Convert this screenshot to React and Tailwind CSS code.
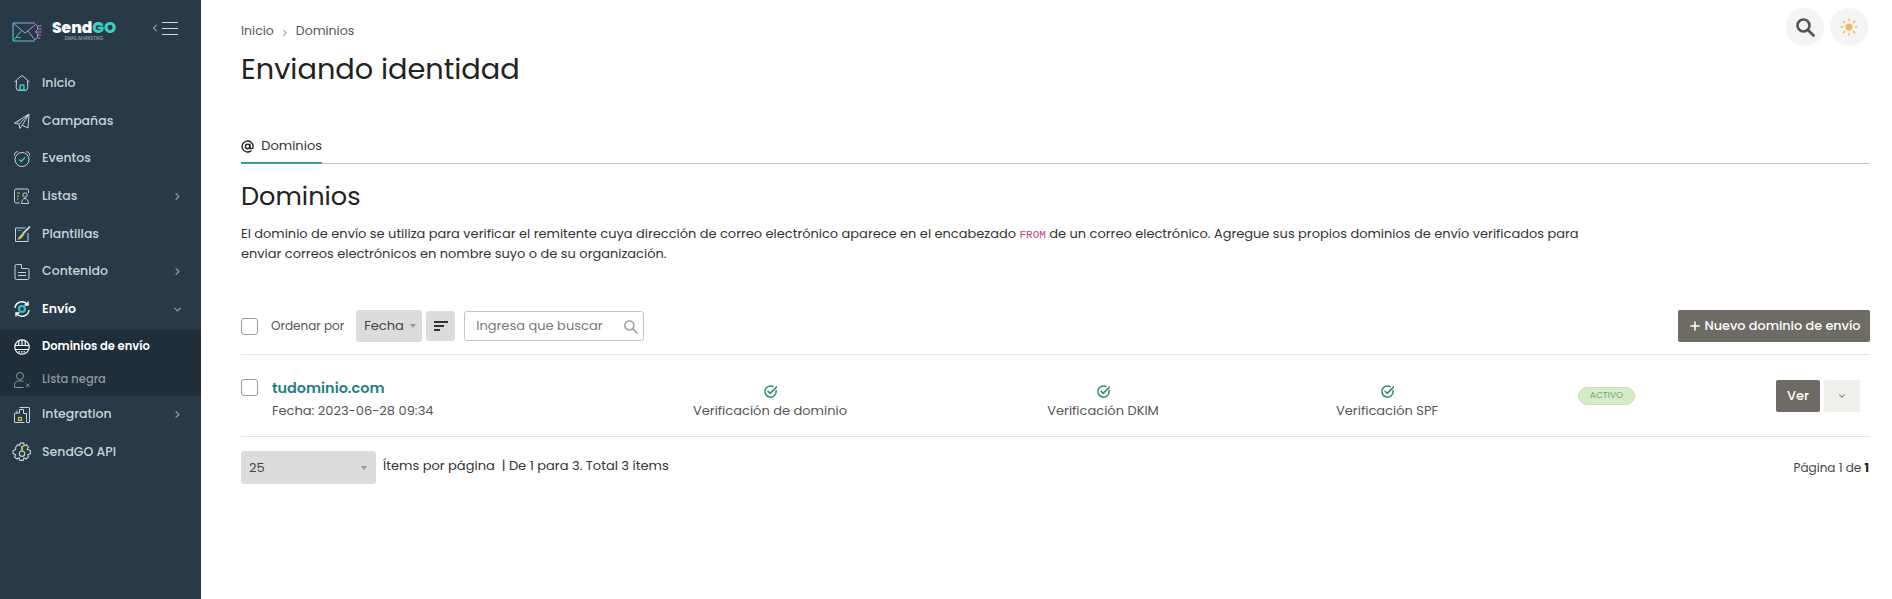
import React from 'react'
import { ChevronRight, ChevronDown, AtSign, Plus } from 'lucide-react'

const stroke = '#c9d3d6'

function Logo() {
  return (
    <svg width="32" height="21" viewBox="0 0 32 21" fill="none">
      <defs>
        <linearGradient id="lg" x1="0" y1="1" x2="1" y2="0">
          <stop offset="0" stopColor="#3ad0c8" />
          <stop offset="1" stopColor="#c58ae8" />
        </linearGradient>
      </defs>
      <path d="M23 1H2a1 1 0 0 0-1 1v16a1 1 0 0 0 1 1h21" stroke="url(#lg)" strokeWidth="1.100" />
      <path d="M1.500 1.500 13 11 23 3M1.500 18.500 9.500 8.500M23 18 16 9" stroke="url(#lg)" strokeWidth="1" />
      <path d="M4 15.500h5" stroke="#3ad0c8" strokeWidth="0.800" />
      <path d="M23 2l2.500 2v3l-2 2.500 2 2.500v3L23 18M25.500 4h4M26 7h3.500M23.500 10h6M26 13h3M25.500 16h2.500" stroke="#c58ae8" strokeWidth="0.900" />
    </svg>
  )
}

function MenuIcon({ name }) {
  const common = { width: 18, height: 18, viewBox: '0 0 18 18', fill: 'none', stroke, strokeWidth: 1 }
  switch (name) {
    case 'home':
      return (
        <svg {...common}>
          <path d="M1.500 8 8 2.200a1.500 1.500 0 0 1 2 0L16.500 8" />
          <path d="M3.500 6.800 3.200 13.500A3 3 0 0 0 6 16.500h6a3 3 0 0 0 2.800-3L14.500 6.800" />
          <path d="M7 16v-4a1 1 0 0 1 1-1h2a1 1 0 0 1 1 1v4Z" stroke="#3ad0c8" strokeWidth="1.400" />
        </svg>
      )
    case 'send':
      return (
        <svg {...common}>
          <path d="M16 2 1.500 11 6 12.300 16 2 9.200 13.300 15 16Z" />
          <path d="M6 12.300 6.800 16.500 9.200 13.300" />
          <path d="M9 6.500 4 11" stroke="#3ad0c8" strokeWidth="0.800" />
        </svg>
      )
    case 'clock':
      return (
        <svg {...common}>
          <circle cx="9" cy="9.500" r="7" />
          <path d="M1.500 5.500C1 3 3 1.500 5 1.800M16.500 5.500C17 3 15 1.500 13 1.800" />
          <path d="M6 9.500 8.200 11.500 12 7.500" stroke="#3ad0c8" strokeWidth="1.400" />
        </svg>
      )
    case 'list':
      return (
        <svg {...common}>
          <path d="M6.500 16H3a1.500 1.500 0 0 1-1.500-1.500v-11A1.500 1.500 0 0 1 3 2h11a1.500 1.500 0 0 1 1.500 1.500V6" />
          <circle cx="12" cy="8" r="2.200" />
          <path d="M8.500 16.500c0-3 1.500-5 3.500-5s3.500 2 3.500 5Z" />
          <path d="M4 6h3M4 9h2" stroke="#d9c44a" strokeWidth="1.200" />
          <path d="M4 12h1.500" />
        </svg>
      )
    case 'template':
      return (
        <svg {...common}>
          <path d="M12.500 3H2.500v13.500h12.500V8" />
          <path d="M4.500 5.500h4" stroke="#3ad0c8" strokeWidth="0.800" />
          <path d="M17 1.500 10 8.500" strokeWidth="1.800" />
          <path d="M10 8 6.500 11.500 5 14.500l3-1.200 3.200-4Z" fill="#d9c44a" stroke="#d9c44a" strokeWidth="0.600" />
        </svg>
      )
    case 'file':
      return (
        <svg {...common}>
          <path d="M2 3A1.500 1.500 0 0 1 3.500 1.500H8.500V5.500h6A1.500 1.500 0 0 1 16 7v8a1.500 1.500 0 0 1-1.500 1.500h-11A1.500 1.500 0 0 1 2 15Z" />
          <path d="M5 9.500h8M5 12.500h8" />
        </svg>
      )
    case 'sync':
      return (
        <svg {...common} stroke="#ffffff" strokeWidth="1.400">
          <path d="M2 8A7 7 0 0 1 14.500 4.500M16 10A7 7 0 0 1 3.500 13.500" />
          <path d="M15 1.500v3.500h-3.500M3 16.500V13h3.500" />
          <circle cx="9" cy="9" r="3" stroke="#2bc4d0" strokeWidth="2.200" />
        </svg>
      )
    case 'globe':
      return (
        <svg {...common} stroke="#ffffff" strokeWidth="1.200">
          <circle cx="9" cy="9" r="7.200" />
          <path d="M1.800 7.500h14.400M1.800 11.500h14.400M9 2v5.500M6 2.500 5.500 7.500M12 2.500l.5 5" />
          <path d="M5.500 13.800h7" strokeDasharray="1.500 1" />
        </svg>
      )
    case 'userx':
      return (
        <svg {...common} stroke="#8b979c">
          <circle cx="7" cy="5" r="3.500" />
          <path d="M1.500 16.500v-3c0-2 2-3.700 5.500-3.700 1.500 0 2.700.3 3.500.8M1.500 16.500h9" />
          <path d="M13 12.500l3.500 3.500M16.500 12.500 13 16" />
        </svg>
      )
    case 'puzzle':
      return (
        <svg {...common}>
          <path d="M6.500 1.500H16a.5.5 0 0 1 .5.5v14.500h-3V7.500h-3v-4h-4V7H2a.5.5 0 0 0-.5.500V16a.5.5 0 0 0 .5.500h9.500" />
          <path d="M4 4.500v3" />
          <rect x="5.500" y="11.500" width="3" height="3" stroke="#d9c44a" strokeWidth="1.200" />
        </svg>
      )
    case 'gear':
      return (
        <svg {...common} width="20" height="20" className="-mx-[1px]">
          <path d="M7.500 1h3l.5 2.200 2-.7 1.800 2.200-1.200 1.800 2.900 1.200v3l-2.200.6.500 2-2.200 2-1.800-1-.8 2.200h-3l-.7-2.200-1.900 1-2.100-2 .9-2-2.200-.6v-3l2.300-.9L3.200 5 5 2.500l1.900.7Z" />
          <circle cx="9" cy="10.500" r="2.400" />
          <path d="M9 3.500V8" stroke="#d9c44a" strokeWidth="1.600" />
          <path d="M9 3.800h2" stroke="#d9c44a" strokeWidth="1.200" />
        </svg>
      )
    default:
      return null
  }
}

const menuItems = [
  { label: 'Inicio', icon: 'home', className: 'h-[38px]' },
  { label: 'Campañas', icon: 'send', className: 'h-[38px]' },
  { label: 'Eventos', icon: 'clock', className: 'h-[37px]' },
  { label: 'Listas', icon: 'list', arrow: 'right', className: 'h-[38px]' },
  { label: 'Plantillas', icon: 'template', className: 'h-[38px]' },
  { label: 'Contenido', icon: 'file', arrow: 'right', className: 'h-[37px]' },
  { label: 'Envío', icon: 'sync', arrow: 'down', active: true, className: 'h-[38px]' },
]

function MenuRow({ item }) {
  return (
    <div className={`flex items-center pl-[13px] pr-[18px] ${item.className}`}>
      <MenuIcon name={item.icon} />
      <span className={`ml-[11px] flex-1 text-[12.500px] ${item.active ? 'font-semibold text-white' : 'font-medium text-[#c9d3d6]'}`}>
        {item.label}
      </span>
      {item.arrow === 'right' && <ChevronRight size={11} strokeWidth={3} className="text-[#8b979c]" />}
      {item.arrow === 'down' && <ChevronDown size={11} strokeWidth={3} className="text-[#8b979c]" />}
    </div>
  )
}

function Sidebar() {
  return (
    <aside className="w-[201px] shrink-0 bg-[#283a48] h-screen overflow-hidden">
      <div className="flex items-center h-[64px] pl-[12px] pr-[23px]">
        <Logo />
        <div className="ml-[8px] w-[64px] text-center -mt-[3px]">
          <div className="text-[15.500px] leading-[16px] font-extrabold text-white">
            Send<span className="text-[#3ad0c8]">GO</span>
          </div>
          <div className="text-[4.500px] leading-[5px] text-[#aab4b8]">EMAIL MARKETING</div>
        </div>
        <div className="ml-auto flex items-center gap-[1px] -mt-[8px]">
          <ChevronRight size={12} className="text-[#d5dcde] rotate-180" />
          <div className="flex flex-col gap-[5px]">
            <div className="w-[16px] h-px bg-[#d5dcde]" />
            <div className="w-[16px] h-px bg-[#d5dcde]" />
            <div className="w-[16px] h-px bg-[#d5dcde]" />
          </div>
        </div>
      </div>
      {menuItems.map((item) => (
        <MenuRow key={item.label} item={item} />
      ))}
      <div className="bg-[#1f2e38] mt-[2px]">
        <div className="flex items-center h-[33px] pl-[13px]">
          <MenuIcon name="globe" />
          <span className="ml-[11px] text-[11.500px] font-semibold text-white">Dominios de envío</span>
        </div>
        <div className="flex items-center h-[33px] pl-[13px]">
          <MenuIcon name="userx" />
          <span className="ml-[11px] text-[11.500px] font-medium text-[#8b979c]">Lista negra</span>
        </div>
      </div>
      <MenuRow item={{ label: 'Integration', icon: 'puzzle', arrow: 'right', className: 'h-[37px]' }} />
      <MenuRow item={{ label: 'SendGO API', icon: 'gear', className: 'h-[38px]' }} />
    </aside>
  )
}

function Caret() {
  return <span className="inline-block w-0 h-0 border-x-[3px] border-x-transparent border-t-[4px] border-t-[#999]" />
}

function CheckBox() {
  return <div className="w-[17px] h-[17px] rounded-[3px] border border-[#9a9a9a] bg-white shrink-0" />
}

function SearchGlyph({ size, color, width }) {
  return (
    <svg width={size} height={size} viewBox="0 0 20 20" fill="none" stroke={color} strokeWidth={width} strokeLinecap="round">
      <circle cx="8.500" cy="8.500" r="6" />
      <path d="M13 13l5.500 5.500" />
    </svg>
  )
}

function VerifyCell({ label, className }) {
  return (
    <div className={`flex flex-col items-center ${className}`}>
      <svg width="15" height="15" viewBox="0 0 24 24" fill="none" stroke="#2e8b66" strokeWidth="2.400" strokeLinecap="round" strokeLinejoin="round">
        <path d="M21 10.500V12a9 9 0 1 1-5-8" />
        <path d="m8 11.500 3.500 3.500L21.500 5" />
      </svg>
      <span className="mt-[2px] text-[13px] leading-[20px] text-[#555]">{label}</span>
    </div>
  )
}

function Main() {
  return (
    <main className="relative flex-1 pl-[40px] pr-[22px] h-screen overflow-hidden bg-white text-[#222]">
      {/* top right round buttons */}
      <div className="absolute top-[8px] right-[2px] mr-[22px] flex gap-[6px]">
        <div className="w-[38px] h-[38px] rounded-full bg-[#f4f4f4] flex items-center justify-center">
          <SearchGlyph size={20} color="#555" width={2.600} />
        </div>
        <div className="w-[38px] h-[38px] rounded-full bg-[#f4f4f4] flex items-center justify-center">
          <svg width="20" height="20" viewBox="0 0 20 20" fill="none" stroke="#f0b560" strokeWidth="1.500" strokeLinecap="round">
            <circle cx="10" cy="10" r="3.500" fill="#f0b560" stroke="none" />
            <path d="M10 2v1.500M10 16.500V18M2 10h1.500M16.500 10H18M4.300 4.300l1.100 1.100M14.600 14.600l1.100 1.100M4.300 15.700l1.100-1.100M14.600 5.400l1.100-1.100" />
          </svg>
        </div>
      </div>

      <div className="pt-[23px] flex items-center text-[12.500px] leading-[16px] text-[#555]">
        <span>Inicio</span>
        <ChevronRight size={10} className="mx-[6px] mt-[3px]" />
        <span>Dominios</span>
      </div>
      <h1 className="mt-[6px] text-[28.800px] leading-[48px] font-normal text-[#222]">Enviando identidad</h1>

      <div className="mt-[42px] border-b border-[#c8c8c8] h-[29px]">
        <div className="inline-flex items-center gap-[7px] w-[81px] h-[29px] pb-[5px] border-b-2 border-[#3a9c96] text-[13px] text-[#333]">
          <AtSign size={15} strokeWidth={2.600} className="text-[#222]" />
          <span>Dominios</span>
        </div>
      </div>

      <h2 className="mt-[14px] text-[25.600px] leading-[36px] font-normal text-[#222]">Dominios</h2>
      <p className="mt-[10px] w-[1350px] text-[12.960px] leading-[20px] text-[#333]">
        El dominio de envío se utiliza para verificar el remitente cuya dirección de correo electrónico aparece en el encabezado{' '}
        <code className="font-['Liberation_Mono',monospace] text-[11px] leading-none text-[#c5408f]">FROM</code>{' '}de un correo electrónico. Agregue sus propios dominios de envío verificados para enviar correos electrónicos en nombre suyo o de su organización.
      </p>

      <div className="mt-[46px] flex items-center h-[32px]">
        <CheckBox />
        <span className="ml-[13px] text-[12px] text-[#555]">Ordenar por</span>
        <div className="ml-[12px] w-[66px] h-[32px] rounded-[3px] bg-[#dcdcdc] flex items-center pl-[8px] gap-[6px] text-[13px] text-[#444]">
          Fecha <Caret />
        </div>
        <div className="ml-[4px] w-[29px] h-[30px] rounded-[3px] bg-[#dcdcdc] flex flex-col items-start justify-center gap-[2px] pl-[8px]">
          <div className="w-[14px] h-[2px] bg-[#333]" />
          <div className="w-[10px] h-[2px] bg-[#333]" />
          <div className="w-[6px] h-[2px] bg-[#333]" />
        </div>
        <div className="ml-[9px] w-[180px] h-[30px] rounded-[3px] border border-[#c4c4c4] flex items-center pl-[11px] pr-[5px] justify-between">
          <span className="text-[13px] text-[#777]">Ingresa que buscar</span>
          <SearchGlyph size={15} color="#aaa" width={2.400} />
        </div>
        <div className="ml-auto w-[192px] h-[32px] rounded-[2px] bg-[#6e6a64] flex items-center justify-center gap-[3px] text-[12.800px] font-medium text-white">
          <Plus size={14} strokeWidth={2.600} />
          Nuevo dominio de envío
        </div>
      </div>

      <div className="mt-[12px] border-t border-[#e4e4e4] border-b h-[83px] flex items-center relative">
        <div className="w-[31px] self-start pt-[24px]"><CheckBox /></div>
        <div className="w-[398px] mt-[5px]">
          <div className="text-[14.400px] leading-[22px] font-semibold text-[#1b8088]">tudominio.com</div>
          <div className="mt-[3px] text-[13px] leading-[18px] text-[#555]">Fecha: 2023-06-28 09:34</div>
        </div>
        <VerifyCell label="Verificación de dominio" className="w-[200px] mt-[13px]" />
        <div className="w-[168px]" />
        <VerifyCell label="Verificación DKIM" className="w-[130px] mt-[13px]" />
        <div className="w-[154px]" />
        <VerifyCell label="Verificación SPF" className="w-[130px] mt-[13px]" />
        <div className="ml-[126px] w-[57px] h-[18px] rounded-full border border-[#c4e0b4] bg-[#d3ecc6] flex items-center justify-center text-[9px] text-[#7d9c74]">
          ACTIVO
        </div>
        <div className="ml-auto mr-[10px] flex gap-[4px]">
          <div className="w-[44px] h-[32px] rounded-[2px] bg-[#6e6a64] flex items-center justify-center text-[13px] font-medium text-white">Ver</div>
          <div className="w-[36px] h-[32px] rounded-[2px] bg-[#efefec] flex items-center justify-center">
            <ChevronDown size={10} strokeWidth={2.500} className="text-[#777]" />
          </div>
        </div>
      </div>

      <div className="mt-[14px] flex items-center">
        <div className="w-[135px] h-[33px] rounded-[3px] bg-[#dcdcdc] flex items-center justify-between pl-[8px] pr-[9px] text-[13px] text-[#444]">
          25 <Caret />
        </div>
        <span className="ml-[7px] -mt-[3px] text-[13px] text-[#333]">Ítems por página &nbsp;| De 1 para 3. Total 3 ítems</span>
        <span className="ml-auto mr-[1px] text-[12px] text-[#444]">Página 1 de <b className="text-[#222]">1</b></span>
      </div>
    </main>
  )
}

export default function App() {
  return (
    <div className="flex h-screen font-['Poppins','Inter','Noto_Sans',sans-serif]">
      <Sidebar />
      <Main />
    </div>
  )
}
